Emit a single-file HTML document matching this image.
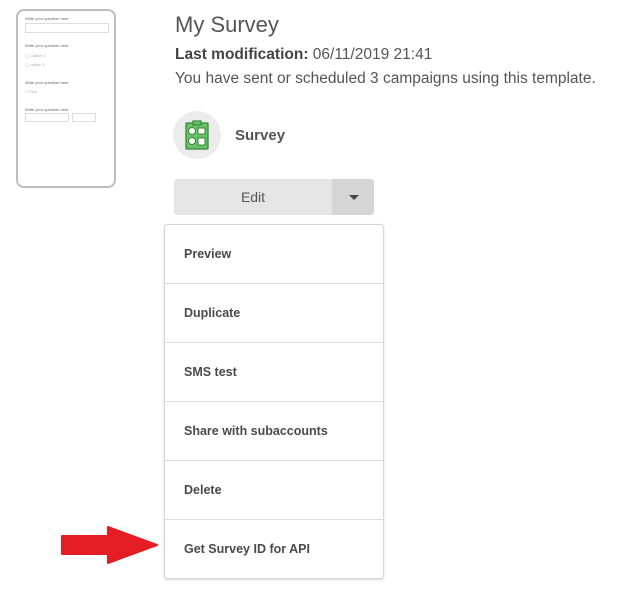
<!DOCTYPE html>
<html><head><meta charset="utf-8"><style>
*{margin:0;padding:0;box-sizing:border-box}
body{width:617px;height:589px;background:#fff;position:relative;overflow:hidden;font-family:"Liberation Sans",sans-serif;color:#555}
.a{position:absolute;white-space:nowrap}
.thumb{position:absolute;left:16px;top:9px;width:100px;height:179px;border:2px solid #bdbdbd;border-radius:8px;font-size:4px;color:#666}
.thumb .t{position:absolute;left:7px}
.thumb .box{position:absolute;border:1px solid #ddd}
.menu{position:absolute;left:164px;top:224px;width:220px;height:355px;border:1px solid #d6d6d6;border-radius:3px;box-shadow:0 1px 2px rgba(0,0,0,.15);background:#fff}
.it{height:59px;border-bottom:1px solid #ddd;font-size:12.5px;font-weight:bold;color:#4a4a4a;padding-left:19px;line-height:59px}
.it:last-child{border-bottom:none}
</style></head><body>
<div class="thumb">
 <div class="t" style="top:5px">Write your question here</div>
 <div class="box" style="left:7px;top:12px;width:84px;height:10px"></div>
 <div class="t" style="top:32px">Write your question here</div>
 <div class="t" style="top:42px;color:#aaa">◯ Option 1</div>
 <div class="t" style="top:51px;color:#aaa">◯ option 2</div>
 <div class="t" style="top:69px">Write your question here</div>
 <div class="t" style="top:78px;color:#aaa">☐ Text</div>
 <div class="t" style="top:96px">Write your question here</div>
 <div class="box" style="left:7px;top:102px;width:44px;height:9px"></div>
 <div class="box" style="left:54px;top:102px;width:24px;height:9px"></div>
</div>
<div class="a" style="left:175px;top:12px;font-size:22px;color:#555">My Survey</div>
<div class="a" style="left:175px;top:46px;font-size:15.5px;color:#555"><b style="color:#444">Last modification:</b> 06/11/2019 21:41</div>
<div class="a" style="left:175px;top:70px;font-size:15.5px;letter-spacing:0;color:#555">You have sent or scheduled 3 campaigns using this template.</div>
<div class="a" style="left:173px;top:111px;width:48px;height:48px;border-radius:50%;background:#ececec"></div>
<svg class="a" style="left:185px;top:120px" width="24" height="30" viewBox="0 0 24 30">
<rect x="1" y="3" width="22" height="26" rx="1" fill="#6cc06a" stroke="#2f8a35" stroke-width="1.3"/>
<rect x="8" y="1" width="8" height="4" fill="#6cc06a" stroke="#2f8a35" stroke-width="1.2"/>
<circle cx="7" cy="11" r="3.5" fill="#fff" stroke="#2f8a35"/><rect x="13" y="8" width="7" height="6" fill="#fff" stroke="#2f8a35"/>
<circle cx="7" cy="21" r="3.5" fill="#fff" stroke="#2f8a35"/><rect x="13" y="18" width="7" height="7" fill="#fff" stroke="#2f8a35"/>
</svg>
<div class="a" style="left:235px;top:127px;font-size:15px;font-weight:bold;color:#555">Survey</div>
<div class="a" style="left:174px;top:179px;width:200px;height:36px;border-radius:3px;background:#e5e5e5;overflow:hidden">
 <div class="a" style="left:0;top:0;width:158px;line-height:36px;text-align:center;font-size:14px;color:#555">Edit</div>
 <div class="a" style="left:158px;top:0;width:42px;height:36px;background:#d5d5d5"></div>
 <div class="a" style="left:175px;top:16px;width:0;height:0;border-left:5px solid transparent;border-right:5px solid transparent;border-top:5px solid #444"></div>
</div>
<div class="menu">
 <div class="it">Preview</div><div class="it">Duplicate</div><div class="it">SMS test</div>
 <div class="it">Share with subaccounts</div><div class="it">Delete</div><div class="it">Get Survey ID for API</div>
</div>
<svg class="a" style="left:60px;top:526px" width="100" height="40" viewBox="0 0 100 40">
<path d="M2 10 H48 V1 L97 19 L48 37 V28 H2 Z" fill="#e41d24" stroke="#e41d24" stroke-width="2" stroke-linejoin="round"/>
</svg>
</body></html>
